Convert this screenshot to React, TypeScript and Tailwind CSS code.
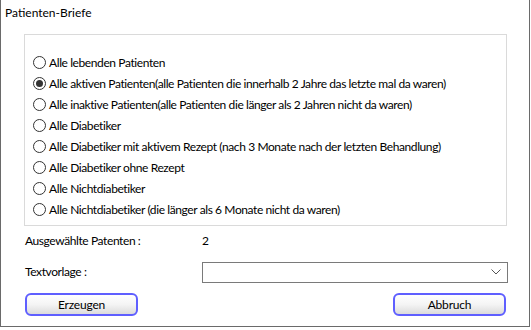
import React, { useState } from "react";

const options = [
  "Alle lebenden Patienten",
  "Alle aktiven Patienten(alle Patienten die innerhalb 2 Jahre das letzte mal da waren)",
  "Alle inaktive Patienten(alle Patienten die länger als 2 Jahren nicht da waren)",
  "Alle Diabetiker",
  "Alle Diabetiker mit aktivem Rezept (nach 3 Monate nach der letzten Behandlung)",
  "Alle Diabetiker ohne Rezept",
  "Alle Nichtdiabetiker",
  "Alle Nichtdiabetiker (die länger als 6 Monate nicht da waren)",
];

function Radio({ checked }: { checked: boolean }) {
  return (
    <span className="flex h-[13px] w-[13px] shrink-0 items-center justify-center rounded-full border border-[#333333] bg-white">
      {checked && <span className="h-[7px] w-[7px] rounded-full bg-[#333333]" />}
    </span>
  );
}

function WinButton({ label }: { label: string }) {
  return (
    <button className="flex h-[23px] w-[113px] items-center justify-center rounded-[6px] border-2 border-[#5f5fff] bg-gradient-to-b from-white via-[#f4f4f4] to-[#dcdcdc] text-[12px] tracking-[-0.2px] text-black">
      {label}
    </button>
  );
}

export default function App() {
  const [selected, setSelected] = useState(1);

  return (
    <div className="h-[330px] w-[531px] bg-white font-['Lato',sans-serif] text-[12px] tracking-[-0.4px] text-black">
      <div className="h-[327px] w-[530px] border-x border-b border-[#6a6a6a]">
        {/* Title */}
        <div className="pl-[4px] pt-[5px] leading-[16px] tracking-normal">Patienten-Briefe</div>

        {/* Group box */}
        <div className="mx-[23px] mt-[13px] h-[192px] w-[483px] border border-[#dadada] pl-[8px] pt-[17px]">
          <div className="flex flex-col">
            {options.map((o, i) => (
              <label
                key={i}
                onClick={() => setSelected(i)}
                className="flex h-[21px] cursor-default items-center gap-[3px] whitespace-nowrap"
              >
                <Radio checked={selected === i} />
                <span className="leading-[16px]">{o}</span>
              </label>
            ))}
          </div>
        </div>

        {/* Info rows */}
        <div className="mt-[6px] flex h-[18px] items-center pl-[24px]">
          <span className="w-[177px]">Ausgewählte Patenten :</span>
          <span>2</span>
        </div>
        <div className="mt-[11px] flex h-[22px] items-center pl-[24px]">
          <span className="w-[177px]">Textvorlage :</span>
          <div className="flex h-[21px] w-[306px] items-center justify-end border border-[#7a7a7a] bg-white pr-[6px]">
            <svg width="10" height="6" viewBox="0 0 10 6" fill="none">
              <path d="M0.5 0.5 L5 5 L9.5 0.5" stroke="#555" strokeWidth="1" />
            </svg>
          </div>
        </div>

        {/* Buttons */}
        <div className="mt-[10px] flex justify-between pl-[24px] pr-[23px]">
          <WinButton label="Erzeugen" />
          <WinButton label="Abbruch" />
        </div>
      </div>
    </div>
  );
}
